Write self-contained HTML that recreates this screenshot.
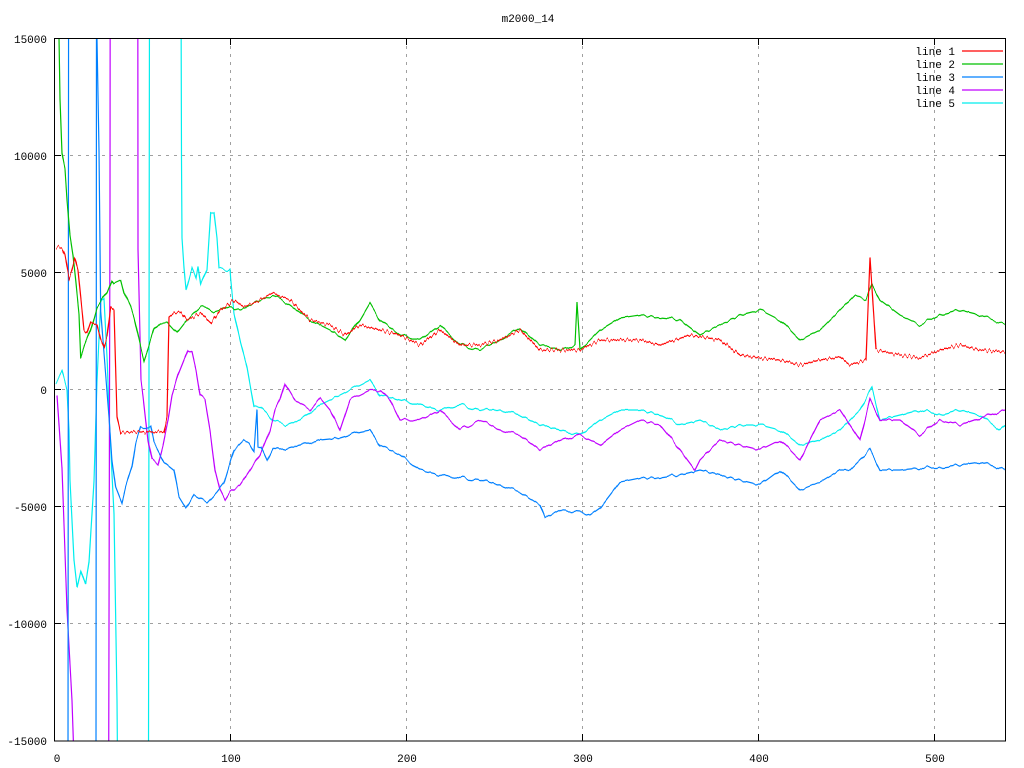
<!DOCTYPE html>
<html><head><meta charset="utf-8"><style>
html,body{margin:0;padding:0;background:#fff;width:1024px;height:768px;overflow:hidden;}
svg{display:block;overflow:hidden;}
text{font-family:"Liberation Mono",monospace;font-size:11px;fill:#000;}
</style></head><body>
<svg width="1024" height="768" viewBox="0 0 1024 768" xmlns="http://www.w3.org/2000/svg">
<defs>
<clipPath id="c"><rect x="54" y="38" width="952" height="703"/></clipPath>
<filter id="n1" x="-5%" y="-5%" width="110%" height="110%"><feTurbulence type="fractalNoise" baseFrequency="0.45 0" numOctaves="1" seed="3"/><feColorMatrix type="matrix" values="1 0 0 0 0  0 0 0 0 0.5  0 0 0 0 0.5  0 0 0 0 1"/><feDisplacementMap in="SourceGraphic" scale="9" xChannelSelector="G" yChannelSelector="R"/></filter>
<filter id="n2" x="-5%" y="-5%" width="110%" height="110%"><feTurbulence type="fractalNoise" baseFrequency="0.12 0" numOctaves="2" seed="5"/><feColorMatrix type="matrix" values="1 0 0 0 0  0 0 0 0 0.5  0 0 0 0 0.5  0 0 0 0 1"/><feDisplacementMap in="SourceGraphic" scale="7" xChannelSelector="G" yChannelSelector="R"/></filter>
</defs>
<rect width="1024" height="768" fill="#fff"/>
<text x="528" y="22" text-anchor="middle">m2000_14</text>
<g stroke="#a0a0a0" stroke-dasharray="3,5" stroke-width="1">
<line x1="230.5" y1="38" x2="230.5" y2="741"/><line x1="406.5" y1="38" x2="406.5" y2="741"/>
<line x1="582.5" y1="38" x2="582.5" y2="741"/><line x1="758.5" y1="38" x2="758.5" y2="741"/>
<line x1="934.5" y1="38" x2="934.5" y2="741"/>
<line x1="54" y1="155.5" x2="1006" y2="155.5"/><line x1="54" y1="272.5" x2="1006" y2="272.5"/>
<line x1="54" y1="389.5" x2="1006" y2="389.5"/><line x1="54" y1="506.5" x2="1006" y2="506.5"/>
<line x1="54" y1="623.5" x2="1006" y2="623.5"/>
</g>
<g stroke="#000" stroke-width="1">
<path d="M230.5 741v-7M406.5 741v-7M582.5 741v-7M758.5 741v-7M934.5 741v-7M230.5 38v7M406.5 38v7M582.5 38v7M758.5 38v7M934.5 38v7M54 155.5h7M54 272.5h7M54 389.5h7M54 506.5h7M54 623.5h7M1006 155.5h-7M1006 272.5h-7M1006 389.5h-7M1006 506.5h-7M1006 623.5h-7"/>
</g>
<g text-anchor="end">
<text x="47" y="43">15000</text><text x="47" y="160">10000</text><text x="47" y="277">5000</text>
<text x="47" y="394">0</text><text x="47" y="511">-5000</text><text x="47" y="628">-10000</text><text x="47" y="745">-15000</text>
</g>
<g text-anchor="middle">
<text x="57" y="762">0</text><text x="231" y="762">100</text><text x="407" y="762">200</text>
<text x="583" y="762">300</text><text x="759" y="762">400</text><text x="935" y="762">500</text>
</g>
<g clip-path="url(#c)" fill="none" stroke-width="1.2">
<g filter="url(#n2)">
<polyline stroke="#00eeee" points="56,383 62,372 67,390 69,430 70,480 74,560 77,587 80.7,570 85.7,585 89,563 94,480 97,380 100.7,303 104,300 107.3,363 109,413 114,513 117,700 117.5,760 148.5,760 149.5,-20 181,-20 181.5,160 182,238 184,268 186,290 192,268 196,278 198,266 200.7,285 207,270 210.7,212 214,212 217,238 219,268 227,271 230,270 230.7,280 234,313 240.7,343 247,367 254,407 260.7,407 267,413 272.7,420 285,425 300,420 320,405 340,395 360,385 370,380 380,395 400,400 420,405 440,410 460,405 480,410 500,410 520,415 540,425 560,430 580,435 600,420 620,410 640,410 660,415 680,425 700,420 720,430 740,425 760,425 780,430 800,445 820,440 840,430 860,410 872,388 880,420 900,415 920,410 940,415 960,410 980,415 1000,430 1006,425"/>
<polyline stroke="#c000ff" points="57,395 62,470 67,610 72,700 74,760 108.7,760 109.5,400 110,205 110.2,-20 137.8,-20 138,250 141,380 143,395 148,440 152,460 158,465 163,445 168,420 172,395 178,375 186,355 188,350 192,352 196,370 200,395 205,400 210,430 215,470 220,490 225,500 230,492 240,485 250,470 260,455 270,430 275,410 280,400 285,383 295,400 310,410 320,398 330,410 340,430 350,400 360,395 370,390 380,390 390,400 400,420 420,420 440,410 460,430 480,420 500,430 520,435 540,450 560,440 580,435 600,445 620,430 640,420 660,425 680,450 695,470 700,460 720,440 740,445 760,450 780,440 800,460 820,420 840,410 860,440 870,400 880,420 900,420 920,435 940,420 960,425 980,418 1006,410"/>
<polyline stroke="#0080ff" points="57,-20 68.6,-20 68,760 96,760 96.5,-20 97,38 99,150 100.7,313 109,417 112,460 115.7,487 122,503 125.7,487 132,467 135.7,443 140.7,427 150.7,427 154,443 164,462 174,470 179,497 185.7,508 194,495 207,503 217,492 224,483 234,450 244,440 249,443 254,452 257,410 258,447 261,447 267,460 273,448 280,450 300,445 320,440 340,438 360,432 370,430 380,445 400,455 420,470 440,475 460,478 480,480 500,485 520,492 540,505 545,518 560,510 580,512 590,515 600,508 620,482 640,478 660,478 680,475 700,470 720,475 740,480 760,485 780,470 800,490 820,482 840,470 850,470 870,450 880,470 900,470 920,468 940,468 960,465 980,462 1006,470"/>
<polyline stroke="#00c000" points="59,38 60,100 62,155 65,170 67,200 70,235 73,255 75.7,280 79,313 80.7,357 84,347 90.7,330 97,307 102,300 107,293 112,280 114,283 120.7,280 124,293 130.7,307 134,317 140.7,347 144,360 150.7,340 154,330 160.7,323 167,322 177,333 187,320 194,313 200.7,307 207,308 214,312 220.7,310 227,307 240.7,310 254,303 272.7,295 290,305 310,320 330,330 345,340 360,320 370,303 380,320 400,335 420,340 440,325 460,345 480,350 500,340 520,328 540,345 560,350 575,345 577,303 580,350 600,330 620,318 640,315 660,318 680,320 700,335 720,325 740,315 760,310 780,320 800,340 820,330 840,310 855,295 866,300 872,285 880,300 900,315 920,325 940,315 960,310 980,315 1006,325"/>
</g>
<g filter="url(#n1)">
<polyline stroke="#ff0000" points="56,247 62,248 65,255 69,278 72,270 75,258 78,270 82,310 84,330 87,333 90.7,322 97,325 100.7,340 104,347 107,337 110.7,307 114,310 117,417 120.7,433 127,432 164,432 167,417 169,317 174,313 180.7,312 187,320 200.7,313 210.7,323 220.7,310 234,300 244,307 254,303 272.7,293 290,300 310,320 330,325 345,335 360,325 380,330 400,335 420,345 440,330 460,345 480,345 500,340 520,330 540,350 560,350 580,350 600,340 620,340 640,340 660,345 690,335 720,340 740,355 760,358 780,360 800,365 820,360 840,357 850,365 866,360 870,257 876,350 900,355 920,358 940,350 960,345 980,350 1006,352"/>
</g>
</g>
<g text-anchor="end">
<text x="955" y="55">line 1</text><text x="955" y="68">line 2</text><text x="955" y="81">line 3</text>
<text x="955" y="94">line 4</text><text x="955" y="107">line 5</text>
</g>
<g stroke-width="1.2">
<line x1="962" y1="51" x2="1003" y2="51" stroke="#ff0000"/>
<line x1="962" y1="64" x2="1003" y2="64" stroke="#00c000"/>
<line x1="962" y1="77" x2="1003" y2="77" stroke="#0080ff"/>
<line x1="962" y1="90" x2="1003" y2="90" stroke="#c000ff"/>
<line x1="962" y1="103" x2="1003" y2="103" stroke="#00eeee"/>
</g>
<rect x="54.5" y="38.5" width="951" height="702.5" fill="none" stroke="#000"/>
</svg>
</body></html>
